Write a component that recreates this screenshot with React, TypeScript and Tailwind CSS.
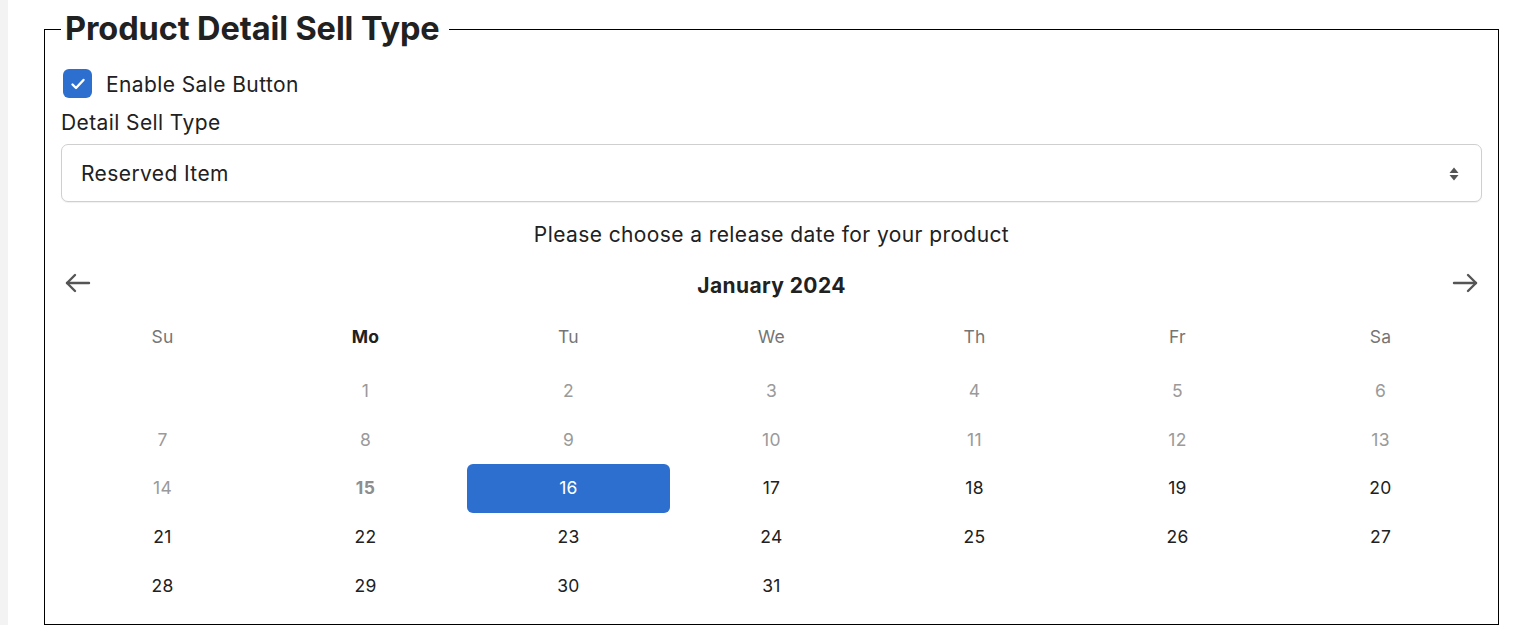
import { useState } from 'react'

// Product detail sell type form with a release-date calendar.
const WEEKDAYS = ['Su', 'Mo', 'Tu', 'We', 'Th', 'Fr', 'Sa']

// January 2024 starts on a Monday; days before today (15) are greyed out.
const TODAY = 15
const FIRST_WEEKDAY = 1
const DAYS_IN_MONTH = 31

function buildWeeks(): (number | null)[][] {
  const cells: (number | null)[] = []
  for (let i = 0; i < FIRST_WEEKDAY; i++) cells.push(null)
  for (let d = 1; d <= DAYS_IN_MONTH; d++) cells.push(d)
  while (cells.length % 7 !== 0) cells.push(null)
  const weeks: (number | null)[][] = []
  for (let i = 0; i < cells.length; i += 7) weeks.push(cells.slice(i, i + 7))
  return weeks
}

function ArrowLeft() {
  return (
    <svg width="27" height="22" viewBox="0 0 27 22" fill="none" stroke="#555" strokeWidth="2.4" strokeLinecap="round" strokeLinejoin="round">
      <path d="M25 11H3" />
      <path d="M11 3L3 11l8 8" />
    </svg>
  )
}

function ArrowRight() {
  return (
    <svg width="27" height="22" viewBox="0 0 27 22" fill="none" stroke="#555" strokeWidth="2.4" strokeLinecap="round" strokeLinejoin="round">
      <path d="M2 11h22" />
      <path d="M16 3l8 8-8 8" />
    </svg>
  )
}

export default function App() {
  const [enabled, setEnabled] = useState(true)
  const [selected, setSelected] = useState(16)
  const weeks = buildWeeks()

  return (
    <div className="min-h-[642px] bg-white font-['Inter','Liberation_Sans',sans-serif] text-[#212121]">
      <div className="flex">
        <div className="w-[8px] shrink-0 self-stretch bg-[#f3f3f3]" />
        <fieldset className="ml-[36px] mt-[11px] w-[1455px] border border-black px-[16px] pb-[14px] pt-0">
          <legend className="pl-[4px] pr-[9px] text-[32.5px] font-bold leading-[36px] tracking-[-0.1px]">
            Product Detail Sell Type
          </legend>

          <label className="mt-[22px] flex h-[29px] items-center gap-[14px]">
            <button
              type="button"
              onClick={() => setEnabled(!enabled)}
              className={
                enabled
                  ? 'ml-[2px] flex h-[29px] w-[29px] items-center justify-center rounded-[6px] bg-[#2d6fcf]'
                  : 'ml-[2px] flex h-[29px] w-[29px] items-center justify-center rounded-[6px] border border-[#999] bg-white'
              }
            >
              {enabled ? (
                <svg width="16" height="16" viewBox="0 0 16 16" fill="none" stroke="white" strokeWidth="2.4" strokeLinecap="round" strokeLinejoin="round">
                  <path d="M2.5 8.5l3.5 3.5 7.5-8" />
                </svg>
              ) : null}
            </button>
            <span className="pt-[2px] text-[21px] leading-[24px] tracking-[0.4px]">Enable Sale Button</span>
          </label>

          <div className="mt-[12px] pt-[1px] text-[21px] leading-[24px] tracking-[0.4px]">Detail Sell Type</div>

          <div className="mt-[9px] flex h-[58px] items-center justify-between rounded-[7px] border border-[#cfcfcf] bg-white pl-[19px] pr-[22px] pt-[1px] shadow-[0_1px_1px_rgba(0,0,0,0.06)]">
            <span className="text-[21px] leading-[24px] tracking-[0.4px]">Reserved Item</span>
            <svg width="10" height="16" viewBox="0 0 10 16" fill="#555">
              <path d="M5 1.5L9.5 7h-9z" />
              <path d="M5 14.5L0.5 9h9z" />
            </svg>
          </div>

          <div className="mt-[21px] text-center text-[21px] leading-[24px] tracking-[0.4px]">
            Please choose a release date for your product
          </div>

          <div className="mt-[16px] flex h-[46px] items-center justify-between">
            <button type="button" className="-mt-[6px] ml-[3px]">
              <ArrowLeft />
            </button>
            <div className="text-[21px] font-bold leading-[24px] tracking-[0.4px]">January 2024</div>
            <button type="button" className="-mt-[6px] mr-[3px]">
              <ArrowRight />
            </button>
          </div>

          <div className="mt-[6px] grid h-[44px] grid-cols-7 items-center text-center text-[17.5px] tracking-[0.3px]">
            {WEEKDAYS.map((d) => (
              <div key={d} className={d === 'Mo' ? 'font-bold text-[#212121]' : 'text-[#757575]'}>
                {d}
              </div>
            ))}
          </div>

          <div className="mt-[8px]">
            {weeks.map((week, wi) => (
              <div key={wi} className="grid h-[48.6px] grid-cols-7 text-center text-[17.5px] tracking-[0.3px]">
                {week.map((day, di) => {
                  if (day === null) return <div key={di} />
                  const isSel = day === selected
                  const past = day < TODAY
                  const cls = isSel
                    ? 'flex items-center justify-center rounded-[6px] bg-[#2d6fcf] text-white'
                    : day === TODAY
                      ? 'flex items-center justify-center font-bold text-[#8e8e8e]'
                      : past
                        ? 'flex items-center justify-center text-[#9a9a9a]'
                        : 'flex items-center justify-center text-[#212121]'
                  return (
                    <button
                      type="button"
                      key={di}
                      className={cls}
                      onClick={() => !past && day !== TODAY && setSelected(day)}
                    >
                      {day}
                    </button>
                  )
                })}
              </div>
            ))}
          </div>
        </fieldset>
      </div>
    </div>
  )
}
